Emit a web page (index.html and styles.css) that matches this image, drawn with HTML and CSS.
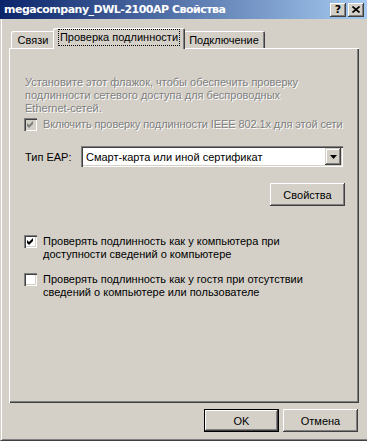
FILE: index.html
```html
<!DOCTYPE html>
<html lang="ru">
<head>
    <meta charset="UTF-8">
    <title>megacompany_DWL-2100AP Свойства</title>
    <link rel="stylesheet" href="styles.css">
</head>
<body>
    <div class="window">
        <div class="titlebar">
            <span class="title">megacompany_DWL-2100AP Свойства</span>
            <div class="caption-buttons">
                <span class="cap-btn cap-help">?</span>
                <span class="cap-btn">
                    <svg width="8" height="7" viewBox="0 0 8 7"><path d="M0.5 0.5 L7.5 6.5 M7.5 0.5 L0.5 6.5" stroke="#000" stroke-width="1.6"/></svg>
                </span>
            </div>
        </div>

        <div class="frame">
            <div class="tabs">
                <div class="tab tab-links">Связи</div>
                <div class="tab tab-auth active"><span class="focus">Проверка подлинности</span></div>
                <div class="tab tab-connect">Подключение</div>
            </div>

            <div class="panel">
                <p class="desc disabled">Установите этот флажок, чтобы обеспечить проверку<br>подлинности сетевого доступа для беспроводных<br>Ethernet-сетей.</p>

                <div class="check-row row-ieee disabled">
                    <span class="checkbox checked off">
                        <svg width="7" height="7" viewBox="0 0 7 7"><polygon points="0,2 2,4 6,0 6,3 2,7 0,5"/></svg>
                    </span>
                    <span class="label nowrap">Включить проверку подлинности IEEE 802.1x для этой сети</span>
                </div>

                <div class="eap-row">
                    <span class="eap-label">Тип EAP:</span>
                    <div class="combo">
                        <span class="combo-text">Смарт-карта или иной сертификат</span>
                        <span class="combo-btn">
                            <svg width="7" height="4" viewBox="0 0 7 4"><polygon points="0,0 7,0 3.5,4" fill="#000"/></svg>
                        </span>
                    </div>
                </div>

                <div class="props-row">
                    <span class="button">Свойства</span>
                </div>

                <div class="check-row row-computer">
                    <span class="checkbox checked">
                        <svg width="7" height="7" viewBox="0 0 7 7"><polygon points="0,2 2,4 6,0 6,3 2,7 0,5"/></svg>
                    </span>
                    <span class="label">Проверять подлинность как у компьютера при<br>доступности сведений о компьютере</span>
                </div>

                <div class="check-row row-guest">
                    <span class="checkbox"></span>
                    <span class="label">Проверять подлинность как у гостя при отсутствии<br>сведений о компьютере или пользователе</span>
                </div>
            </div>

            <div class="dialog-buttons">
                <span class="button default">OK</span>
                <span class="button">Отмена</span>
            </div>
        </div>
    </div>
</body>
</html>
```

FILE: styles.css
```css
/* Classic grey dialog */
body {
    margin: 0;
    padding: 0;
    background-color: #d4d0c8;
    font-family: "Liberation Sans", Arial, sans-serif;
    font-size: 11px;
    color: #000;
}

.window {
    width: 367px;
    height: 441px;
    display: flex;
    flex-direction: column;
}

/* Title bar */
.titlebar {
    height: 19px;
    flex: none;
    display: flex;
    align-items: center;
    justify-content: space-between;
    padding: 0 3px 0 4px;
    background: linear-gradient(to right, #0a246a, #a6caf0);
}

.title {
    color: #fff;
    font-family: "DejaVu Sans", sans-serif;
    font-weight: bold;
    font-size: 11px;
    letter-spacing: -0.5px;
}

.caption-buttons {
    display: flex;
    gap: 2px;
}

.cap-btn {
    width: 16px;
    height: 14px;
    box-sizing: border-box;
    display: flex;
    align-items: center;
    justify-content: center;
    background-color: #d4d0c8;
    box-shadow: inset -1px -1px #404040, inset 1px 1px #fff, inset -2px -2px #808080;
}

.cap-help {
    font-family: "DejaVu Sans", sans-serif;
    font-weight: bold;
    font-size: 11px;
}

/* Dialog body */
.frame {
    flex: 1;
    padding: 9px 8px 0 8px;
    border-left: 1px solid #d4d0c8;
    border-bottom: 1px solid #404040;
    box-shadow: inset 1px 0 #fff, inset 0 -1px #808080;
}

/* Tabs */
.tabs {
    height: 21px;
    display: flex;
    align-items: flex-end;
    padding-left: 2px;
    margin-bottom: -1px;
    position: relative;
    z-index: 1;
}

.tab {
    height: 17px;
    margin-bottom: 1px;
    box-sizing: border-box;
    display: flex;
    align-items: center;
    justify-content: center;
    background-color: #d4d0c8;
    border-radius: 2px 2px 0 0;
    box-shadow: inset 1px 1px #fff, inset -1px 0 #404040, inset -2px 0 #808080;
}

.tab-links {
    width: 44px;
}

.tab-auth {
    width: 128px;
}

.tab-connect {
    width: 82px;
}

.tab.active {
    height: 21px;
    margin: 0 -2px;
    width: 132px;
    position: relative;
    z-index: 2;
    padding-bottom: 2px;
}

.focus {
    outline: 1px dotted #000;
    padding: 1px 1px 2px 1px;
}

/* Tab page */
.panel {
    height: 355px;
    box-sizing: border-box;
    padding: 28px 14px 0 15px;
    box-shadow: inset 1px 1px #fff, inset -1px -1px #404040, inset -2px -2px #808080;
}

.disabled {
    color: #808080;
    text-shadow: 1px 1px 0 #fff;
}

.desc {
    margin: 0;
    line-height: 13px;
    padding-left: 1px;
}

.check-row {
    display: flex;
    align-items: flex-start;
    gap: 6px;
    line-height: 13px;
}

.nowrap {
    white-space: nowrap;
    letter-spacing: -0.1px;
}

.row-ieee {
    margin-top: 3px;
}

.row-computer {
    margin-top: 29px;
}

.row-guest {
    margin-top: 12px;
}

.checkbox {
    width: 13px;
    height: 13px;
    flex: none;
    box-sizing: border-box;
    display: flex;
    align-items: center;
    justify-content: center;
    background-color: #fff;
    box-shadow: inset 1px 1px #808080, inset 2px 2px #404040, inset -1px -1px #fff, inset -2px -2px #d4d0c8;
}

.checkbox svg {
    display: none;
}

.checkbox.checked svg {
    display: block;
    fill: #000;
}

.checkbox.off {
    background-color: #d4d0c8;
}

.checkbox.off svg {
    fill: #808080;
}

/* EAP type */
.eap-row {
    display: flex;
    align-items: center;
    margin-top: 15px;
}

.eap-label {
    width: 57px;
    padding-left: 1px;
    box-sizing: border-box;
}

.combo {
    width: 262px;
    height: 21px;
    box-sizing: border-box;
    display: flex;
    align-items: center;
    justify-content: space-between;
    padding: 2px;
    background-color: #fff;
    box-shadow: inset 1px 1px #808080, inset 2px 2px #404040, inset -1px -1px #fff, inset -2px -2px #d4d0c8;
}

.combo-text {
    padding-left: 3px;
}

.combo-btn {
    width: 16px;
    height: 17px;
    box-sizing: border-box;
    display: flex;
    align-items: center;
    justify-content: center;
    background-color: #d4d0c8;
    box-shadow: inset -1px -1px #404040, inset 1px 1px #d4d0c8, inset -2px -2px #808080, inset 2px 2px #fff;
}

/* Buttons */
.props-row {
    display: flex;
    justify-content: flex-end;
    margin-top: 16px;
}

.button {
    width: 75px;
    height: 23px;
    box-sizing: border-box;
    display: flex;
    align-items: center;
    justify-content: center;
    background-color: #d4d0c8;
    box-shadow: inset -1px -1px #404040, inset 1px 1px #fff, inset -2px -2px #808080;
}

.button.default {
    border: 1px solid #000;
}

.dialog-buttons {
    display: flex;
    justify-content: flex-end;
    gap: 4px;
    margin-top: 6px;
    padding-right: 1px;
}
```
